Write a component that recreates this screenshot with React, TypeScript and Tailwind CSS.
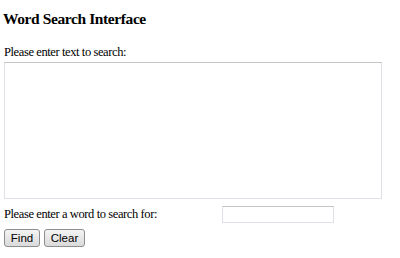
import React, { useState } from 'react';

const serif = { fontFamily: '"Liberation Serif", "Times New Roman", serif' };
const sans = { fontFamily: '"Liberation Sans", Arial, sans-serif' };

export default function App() {
  const [text, setText] = useState('');
  const [word, setWord] = useState('');

  return (
    <div className="w-[400px] h-[258px] bg-white text-black px-[4px]" style={serif}>
      {/* Title */}
      <h3 className="pt-[11px] text-[15.5px] font-bold leading-[16px] tracking-[-0.4px] -ml-[1px]">
        Word Search Interface
      </h3>

      {/* Text to search */}
      <p className="mt-[19px] text-[12.5px] leading-[13px] tracking-[-0.4px]">Please enter text to search:</p>
      <textarea
        value={text}
        onChange={(e) => setText(e.target.value)}
        className="block mt-[3px] w-[378px] h-[137px] border border-[#e0e0e6] border-t-[#c4c4c4] bg-white resize-none outline-none"
      />

      {/* Word to search */}
      <div className="flex items-center mt-[7px] h-[17px]">
        <span className="text-[12.5px] leading-[13px] tracking-[-0.4px] w-[218px]">
          Please enter a word to search for:
        </span>
        <input
          value={word}
          onChange={(e) => setWord(e.target.value)}
          className="w-[112px] h-[17px] border border-[#e0e0e6] border-t-[#c4c4c4] bg-white outline-none"
        />
      </div>

      {/* Buttons */}
      <div className="flex gap-[4px] mt-[6px]">
        <button
          className="w-[36px] h-[18px] border border-[#8e8e8e] rounded-[3px] bg-gradient-to-b from-[#f4f4f4] to-[#dadada] text-[11.5px] leading-[16px]"
          style={sans}
        >
          Find
        </button>
        <button
          className="w-[41px] h-[18px] border border-[#8e8e8e] rounded-[3px] bg-gradient-to-b from-[#f4f4f4] to-[#dadada] text-[11.5px] leading-[16px]"
          style={sans}
        >
          Clear
        </button>
      </div>
    </div>
  );
}
